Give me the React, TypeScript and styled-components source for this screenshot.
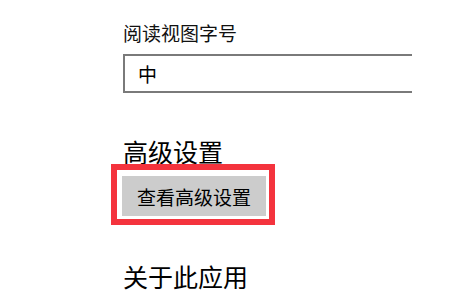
import React from "react";
import styled, { createGlobalStyle } from "styled-components";

const GlobalStyle = createGlobalStyle`
  html, body {
    margin: 0;
    padding: 0;
    background: #ffffff;
  }
  body {
    font-family: "Noto Sans CJK SC", "Noto Sans", sans-serif;
    color: #000;
  }
`;

const Page = styled.div`
  width: 450px;
  height: 300px;
  overflow: hidden;
  padding-left: 123px;
  box-sizing: border-box;
  display: flex;
  flex-direction: column;
  align-items: flex-start;
`;

const FieldLabel = styled.div`
  margin-top: 23px;
  font-size: 19px;
  line-height: 19px;
  color: #111;
`;

const SelectBox = styled.div`
  margin-top: 12px;
  width: 289px;
  height: 39px;
  box-sizing: border-box;
  border: 2px solid #7a7a7a;
  border-right: none;
  display: flex;
  align-items: center;
  padding-left: 13px;
  font-size: 19px;
  line-height: 19px;
`;

const SectionTitle = styled.div<{ $gap: number }>`
  margin-top: ${(p) => p.$gap}px;
  font-size: 25px;
  line-height: 25px;
  color: #000;
`;

const Highlight = styled.div`
  margin-left: -12px;
  border: 6px solid #f4333d;
  padding: 6px 3px 3px 5px;
  display: flex;
`;

const GrayButton = styled.button`
  width: 144px;
  height: 40px;
  border: none;
  background: #cccccc;
  font-family: inherit;
  font-size: 19px;
  line-height: 19px;
  color: #000;
  padding: 0;
  text-align: center;
`;

export default function App() {
  return (
    <>
      <GlobalStyle />
      <Page>
        <FieldLabel>阅读视图字号</FieldLabel>
        <SelectBox>中</SelectBox>
        <SectionTitle $gap={46}>高级设置</SectionTitle>
        <Highlight>
          <GrayButton>查看高级设置</GrayButton>
        </Highlight>
        <SectionTitle $gap={39}>关于此应用</SectionTitle>
      </Page>
    </>
  );
}
